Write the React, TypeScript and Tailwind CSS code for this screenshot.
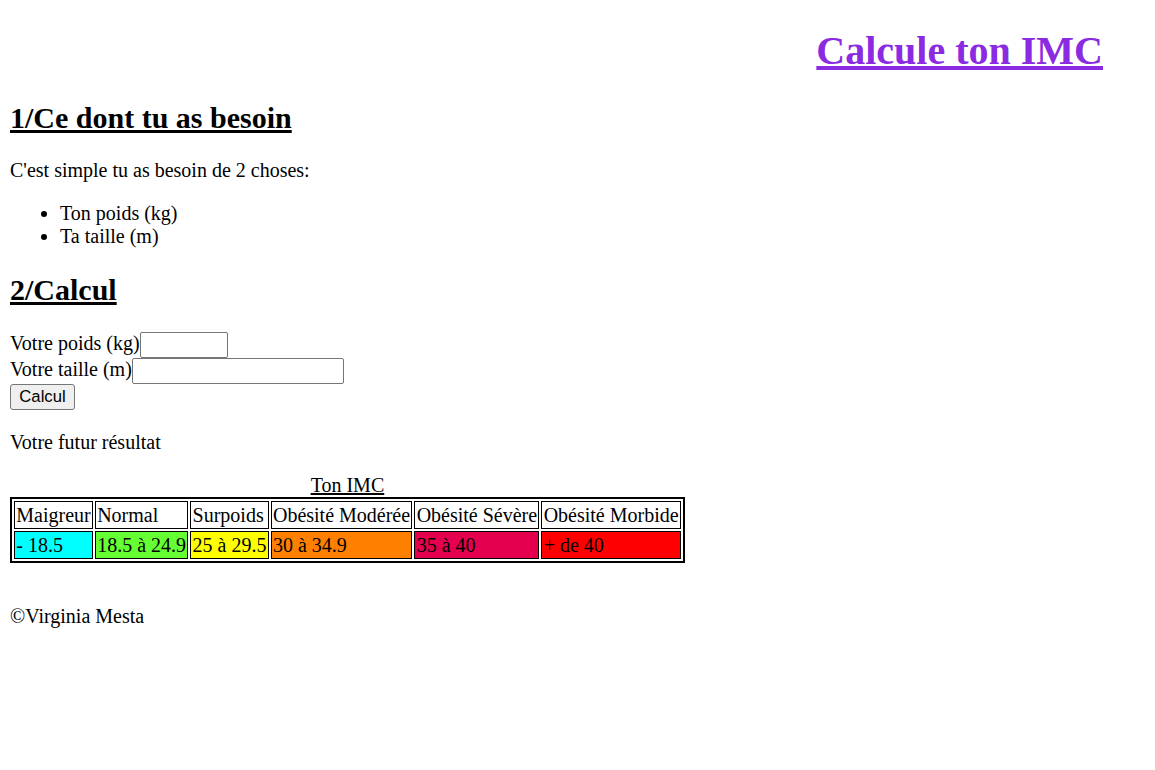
import React from "react";

export default function App() {
  const heads = ["Maigreur", "Normal", "Surpoids", "Obésité Modérée", "Obésité Sévère", "Obésité Morbide"];
  const vals: { t: string; c: string }[] = [
    { t: "- 18.5", c: "bg-[#00ffff]" },
    { t: "18.5 à 24.9", c: "bg-[#66ff33]" },
    { t: "25 à 29.5", c: "bg-[#ffff00]" },
    { t: "30 à 34.9", c: "bg-[#ff8000]" },
    { t: "35 à 40", c: "bg-[#e5004f]" },
    { t: "+ de 40", c: "bg-[#ff0000]" },
  ];
  return (
    <div className="px-[10px] font-['Liberation_Serif','Times_New_Roman',serif] text-[20px] leading-[normal] text-black bg-white min-h-[770px]">
      <h1 className="my-[26.8px] mr-[42px] text-right text-[40px] font-bold leading-[normal]">
        <a className="text-[#8a2be2] underline" href="#">Calcule ton IMC</a>
      </h1>
      <h2 className="my-[24.9px] text-[30px] font-bold underline leading-[normal]">1/Ce dont tu as besoin</h2>
      <p className="my-[20px]">C'est simple tu as besoin de 2 choses:</p>
      <ul className="my-[20px] list-disc pl-[50px]">
        <li>Ton poids (kg)</li>
        <li>Ta taille (m)</li>
      </ul>
      <h2 className="my-[24.9px] text-[30px] font-bold underline leading-[normal]">2/Calcul</h2>
      <div>
        Votre poids (kg)
        <input
          type="text"
          className="inline-block h-[26px] w-[88px] rounded-[2px] border border-[#767676] bg-white px-[2px] align-baseline font-['Liberation_Sans',Arial,sans-serif] text-[16.67px]"
        />
        <br />
        Votre taille (m)
        <input
          type="text"
          className="inline-block h-[26px] w-[212px] rounded-[2px] border border-[#767676] bg-white px-[2px] align-baseline font-['Liberation_Sans',Arial,sans-serif] text-[16.67px]"
        />
        <br />
        <button className="inline-flex h-[26px] w-[65px] items-center justify-center rounded-[3px] border border-[#767676] bg-[#efefef] align-top font-['Liberation_Sans',Arial,sans-serif] text-[16.67px] leading-[normal] text-black">
          Calcul
        </button>
      </div>
      <p className="mt-[21px] mb-[20px]">Votre futur résultat</p>
      <table className="border-separate border-spacing-[2px] border-2 border-black">
        <caption className="text-center underline">Ton IMC</caption>
        <tbody>
          <tr>
            {heads.map((h) => (
              <td key={h} className="border border-black px-[1.25px] py-[1.5px] whitespace-nowrap">{h}</td>
            ))}
          </tr>
          <tr>
            {vals.map((v) => (
              <td key={v.t} className={`border border-black px-[1.25px] py-[1.5px] whitespace-nowrap ${v.c}`}>{v.t}</td>
            ))}
          </tr>
        </tbody>
      </table>
      <footer className="mt-[42px]">
        <p>©Virginia Mesta</p>
      </footer>
    </div>
  );
}
